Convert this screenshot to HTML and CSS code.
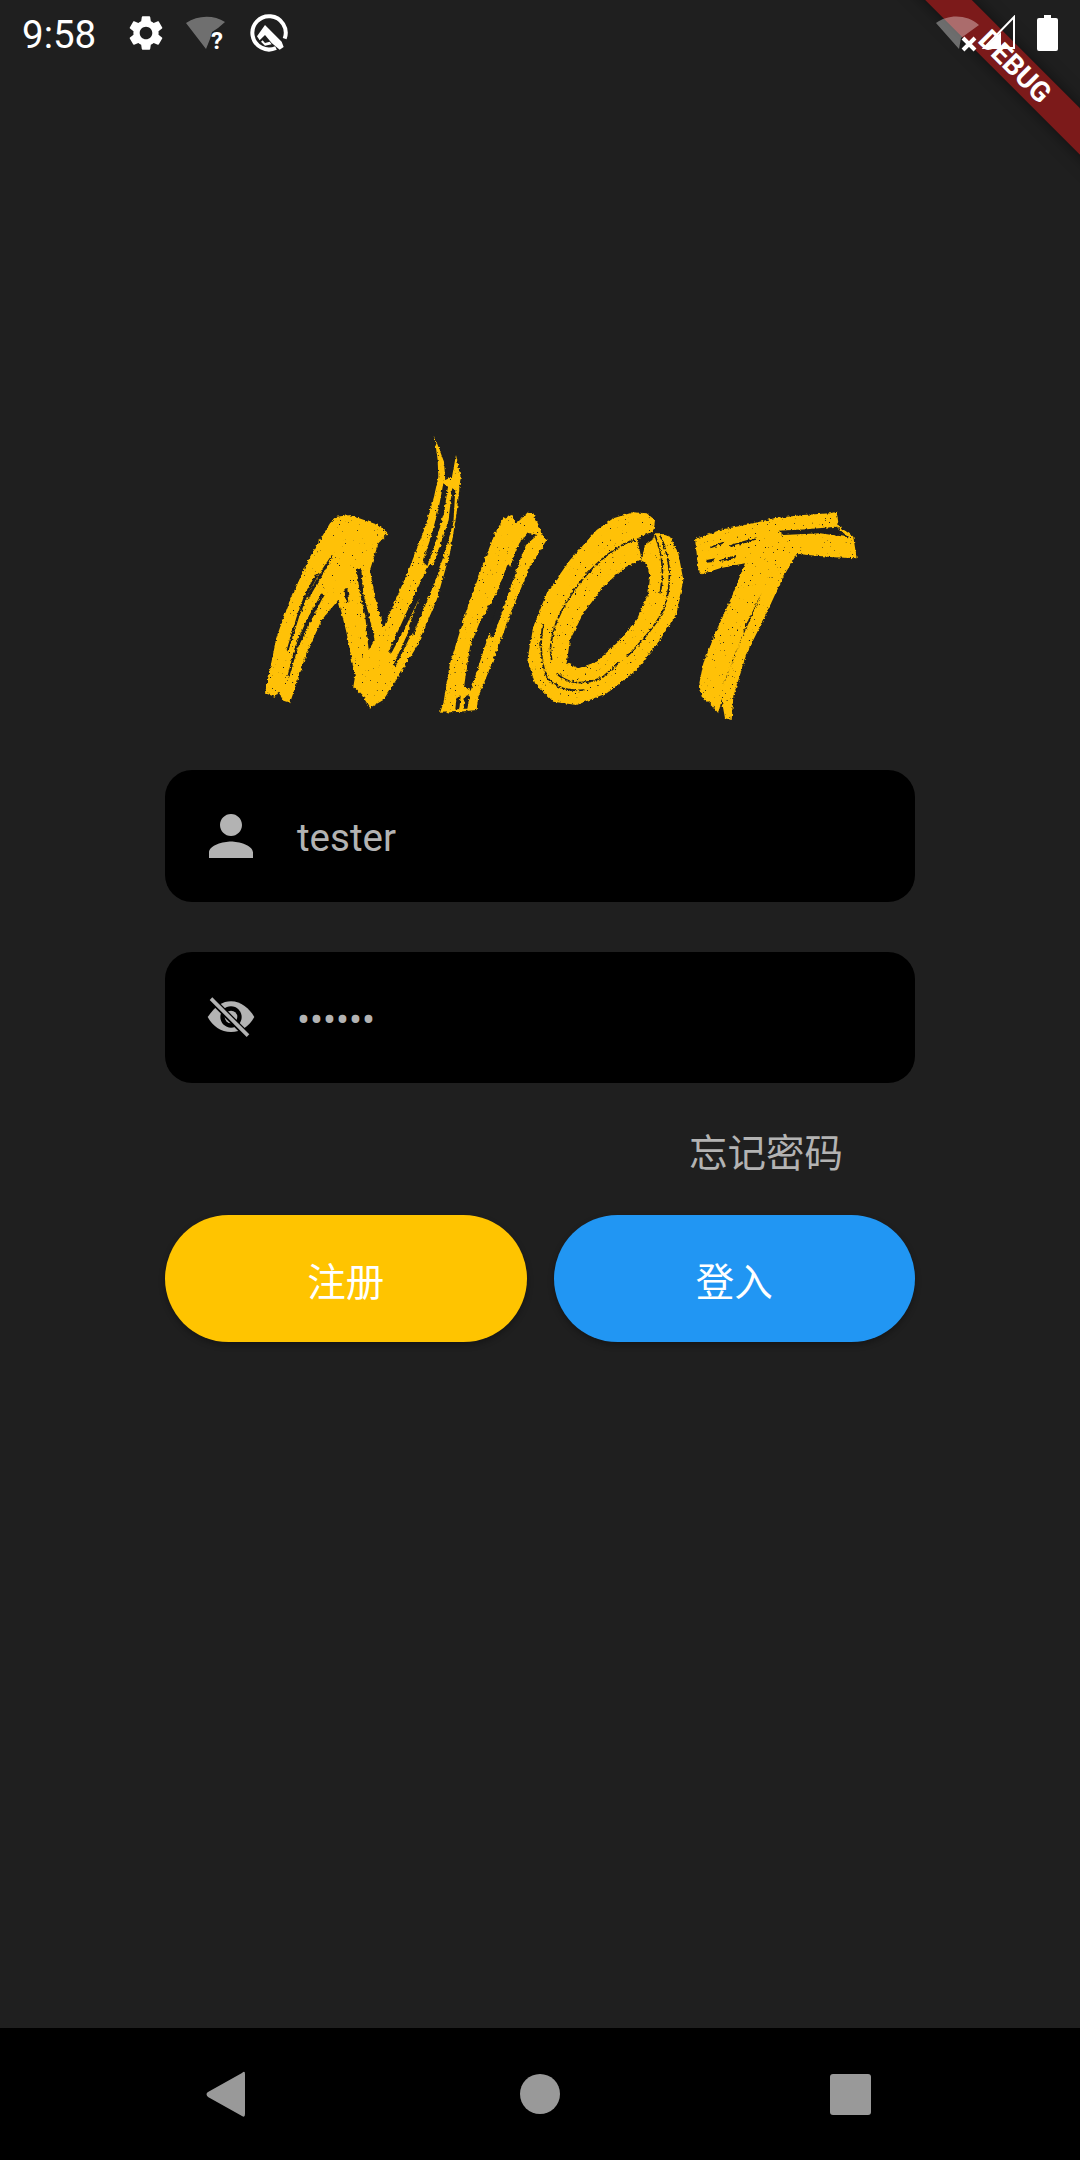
FILE: index.html
```html
<!DOCTYPE html>
<html lang="zh-CN">
<head>
    <meta charset="UTF-8">
    <meta name="viewport" content="width=device-width, initial-scale=1.0">
    <title>NIOT</title>
    <link rel="stylesheet" href="styles.css">
</head>
<body>
    <div class="page">
        <div class="debug-banner"><span>DEBUG</span></div>

        <div class="status-bar">
            <div class="status-left">
                <span class="time">9:58</span>
                <svg class="icon-gear" viewBox="0 0 24 24"><path class="white" d="M19.14 12.94c.04-.3.06-.61.06-.94 0-.32-.02-.64-.07-.94l2.03-1.58c.18-.14.23-.41.12-.61l-1.92-3.32c-.12-.22-.37-.29-.59-.22l-2.39.96c-.5-.38-1.03-.7-1.62-.94l-.36-2.54c-.04-.24-.24-.41-.48-.41h-3.84c-.24 0-.43.17-.47.41l-.36 2.54c-.59.24-1.13.57-1.62.94l-2.39-.96c-.22-.08-.47 0-.59.22L2.74 8.87c-.12.21-.08.47.12.61l2.03 1.58c-.05.3-.09.63-.09.94s.02.64.07.94l-2.03 1.58c-.18.14-.23.41-.12.61l1.92 3.32c.12.22.37.29.59.22l2.39-.96c.5.38 1.03.7 1.62.94l.36 2.54c.05.24.24.41.48.41h3.84c.24 0 .44-.17.47-.41l.36-2.54c.59-.24 1.13-.56 1.62-.94l2.39.96c.22.08.47 0 .59-.22l1.92-3.32c.12-.22.07-.47-.12-.61l-2.01-1.58zM12 15.6c-1.98 0-3.6-1.62-3.6-3.6s1.62-3.6 3.6-3.6 3.6 1.62 3.6 3.6-1.62 3.6-3.6 3.6z"/></svg>
                <svg class="icon-wifi-q" viewBox="0 -5 42 46">
                    <path class="dim" d="M0 8 C12 0 28 0 39 7 L32 13 L26 17 L24 24 L20 34 Z"/>
                    <text class="wifi-mark" x="25" y="34">?</text>
                </svg>
                <svg class="icon-q" viewBox="0 -7 168 162">
                    <path class="q-ring" d="M105 119 A50 50 0 1 1 131 91"/>
                    <path class="white" d="M72 50 L122 100 L128 116 L116 124 L92 104 L72 80 L56 96 L48 84 Z"/>
                    <path class="white" d="M60 100 L72 112 L92 108 L86 100 L72 104 L65 96 Z"/>
                </svg>
            </div>
            <div class="status-right">
                <svg class="icon-wifi-x" viewBox="0 0 46 38">
                    <path class="dim" d="M1 9 C13 0 32 0 44 11 L26 24 L24 35 Z"/>
                    <path class="x-mark" d="M28 24 L40 36 M40 24 L28 36"/>
                </svg>
                <svg class="icon-signal" viewBox="0 0 36 36">
                    <path class="signal-line" d="M34 2 V33 H4 Z"/>
                    <path class="white" d="M21 17 V33 H4 Z"/>
                </svg>
                <svg class="icon-battery" viewBox="0 0 21 36">
                    <path class="white" d="M7 0 H14 V3 H19 Q21 3 21 5 V34 Q21 36 19 36 H2 Q0 36 0 34 V5 Q0 3 2 3 H7 Z"/>
                </svg>
            </div>
        </div>

        <div class="content">
            <svg class="logo" viewBox="0 0 1860 930">
                <defs>
                    <filter id="rough" x="-5%" y="-10%" width="110%" height="120%" color-interpolation-filters="sRGB">
                        <feTurbulence type="fractalNoise" baseFrequency="0.11" numOctaves="3" seed="7" result="wobble"/>
                        <feDisplacementMap in="SourceGraphic" in2="wobble" scale="11" xChannelSelector="R" yChannelSelector="G" result="shape"/>
                        <feTurbulence type="fractalNoise" baseFrequency="0.2" numOctaves="2" seed="3"/>
                        <feColorMatrix type="matrix" values="0 0 0 0 0  0 0 0 0 0  0 0 0 0 0  14 0 0 0 -10.4" result="specks"/>
                        <feComposite in="shape" in2="specks" operator="out"/>
                    </filter>
                </defs>
                <g filter="url(#rough)">
                    <!-- N -->
                    <path class="ink" d="M45 820 L75 830 L85 815 L100 842 L120 848 L140 790 L170 700 L215 600 L265 540 L290 640 L315 770 L310 800 L335 825 L360 863 L400 840 L445 770 L500 680 L560 540 L600 400 L620 280 L632 170 L618 105 L606 170 L586 180 L582 125 L553 48 L563 120 L565 170 L552 230 L526 320 L476 450 L400 625 L375 530 L360 450 L385 370 L415 340 L385 315 L300 285 L260 290 L240 310 L180 410 L120 540 L80 650 Z"/>
                    <path class="gap" d="M580 190 L565 270 L540 360 L518 425 L532 438 L557 365 L582 280 L594 200 Z"/>
                    <path class="gap" d="M606 205 L596 300 L556 420 L516 510 L476 620 L490 645 L532 530 L577 420 L610 310 L616 210 Z"/>
                    <path class="gap" d="M540 430 L500 510 L450 620 L415 695 L423 701 L467 620 L517 515 L552 440 Z"/>
                    <path class="gap" d="M562 440 L510 560 L430 735 L437 739 L522 565 L572 445 Z"/>
                    <path class="gap" d="M245 405 L215 450 L170 530 L177 534 L223 455 L248 408 Z"/>
                    <path class="gap" d="M200 460 L165 520 L140 590 L110 690 L114 696 L146 595 L173 525 L205 465 Z"/>
                    <path class="gap" d="M215 520 L170 600 L135 680 L112 770 L117 773 L143 685 L182 605 L222 525 Z"/>
                    <path class="gap" d="M320 445 L328 510 L346 590 L356 690 L374 660 L358 590 L340 520 L334 450 Z"/>
                    <path class="gap" d="M283 505 L288 550 L298 545 L292 505 Z"/>
                    <!-- I -->
                    <path class="ink" d="M570 878 L620 876 L680 870 L685 830 L730 720 L790 560 L840 440 L890 360 L875 345 L870 325 L850 280 L835 275 L800 310 L785 285 L760 295 L735 340 L700 430 L650 570 L600 730 L580 850 Z"/>
                    <path class="gap" d="M772 435 L740 520 L692 600 L660 680 L642 800 L662 812 L698 700 L728 610 L756 555 L782 440 Z"/>
                    <path class="gap" d="M835 338 L808 370 L788 420 L756 510 L716 640 L730 652 L774 525 L808 425 L828 375 L862 345 Z"/>
                    <path class="gap" d="M620 830 L616 868 L628 868 L632 830 Z M645 828 L640 866 L652 866 L660 826 Z"/>
                </g>
                <g class="logo-right" filter="url(#rough)">
                    <!-- O -->
                    <path class="ink" fill-rule="evenodd" d="M405 120 L380 100 L340 97 L280 115 L230 150 L150 240 L80 340 L40 440 L22 540 L45 610 L100 665 L170 675 L260 640 L350 570 L420 480 L470 400 L490 300 L475 220 L450 170 L420 160 L400 160 Z M360 240 L310 265 L250 320 L190 400 L150 480 L140 550 L175 565 L230 545 L290 490 L350 420 L385 340 L390 290 L380 250 Z"/>
                    <path class="gap" d="M405 150 L385 160 L350 176 L358 205 L365 240 L375 195 L400 178 Z"/>
                    <path class="logo-line" d="M345 180 C300 190 230 240 170 320 C120 390 80 470 95 540"/>
                    <path class="logo-line" d="M110 580 C140 610 190 620 250 590 L300 545"/>
                    <path class="logo-line" d="M420 165 C450 230 460 310 430 390 C400 450 350 500 320 530"/>
                    <path class="logo-line" d="M70 430 C60 480 60 540 80 590 C100 620 140 635 190 630"/>
                    <path class="logo-line" d="M405 165 C425 220 435 270 420 340"/>
                    <!-- T -->
                    <path class="ink" d="M525 178 L600 150 L700 130 L760 115 L850 105 L930 100 L950 95 L957 140 L980 155 L1000 170 L1010 235 L940 232 L830 222 L790 290 L730 420 L680 520 L640 650 L635 720 L615 715 L605 660 L595 700 L575 675 L545 650 L538 610 L550 550 L590 450 L640 340 L675 250 L600 265 L545 283 L535 270 L530 220 Z"/>
                    <path class="gap" d="M775 152 L860 148 L950 140 L985 172 L900 160 L790 165 Z"/>
                    <path class="gap" d="M725 340 L690 420 L650 510 L620 590 L608 615 L640 540 L680 430 Z"/>
                    <path class="gap" d="M570 200 L610 185 L608 192 L572 205 Z M630 195 L710 172 L705 180 L632 202 Z M560 240 L585 235 L580 246 L558 248 Z M600 240 L650 225 L646 233 L602 246 Z"/>
                </g>
            </svg>

            <div class="field field-first">
                <svg class="field-icon" viewBox="0 0 24 24"><path d="M12 12c2.21 0 4-1.79 4-4s-1.79-4-4-4-4 1.79-4 4 1.79 4 4 4zm0 2c-2.67 0-8 1.34-8 4v2h16v-2c0-2.66-5.33-4-8-4z"/></svg>
                <span class="field-text">tester</span>
            </div>
            <div class="field">
                <svg class="field-icon" viewBox="-4 -14 198 198">
                    <path d="M25 85 C50 50 70 38 95 38 C125 38 150 60 165 85 C150 112 125 130 95 130 C65 130 40 112 25 85 Z"/>
                    <circle class="eye-ring" cx="95" cy="85" r="32"/>
                    <circle cx="95" cy="85" r="19"/>
                    <path class="eye-cut" d="M28 24 L150 146"/>
                    <path class="eye-slash" d="M35 30 L146 141"/>
                </svg>
                <span class="field-text">••••••</span>
            </div>

            <div class="forgot"><span>忘记密码</span></div>

            <div class="buttons">
                <div class="btn btn-register">注册</div>
                <div class="btn btn-login">登入</div>
            </div>
        </div>

        <div class="nav-bar">
            <svg class="nav-icon" viewBox="0 0 60 60"><path d="M46 9 Q49 6 49 10 V50 Q49 54 46 52 L12 33 Q9 30 12 28 Z"/></svg>
            <svg class="nav-icon nav-home" viewBox="0 0 60 60"><circle cx="30" cy="30" r="20"/></svg>
            <svg class="nav-icon" viewBox="0 0 60 60"><rect x="10" y="10" width="41" height="41" rx="3"/></svg>
        </div>
    </div>
</body>
</html>
```

FILE: styles.css
```css
*{
    margin: 0;
    padding: 0;
    box-sizing: border-box;
}
body{
    background-color: #1f1f1f;
    font-family: Roboto, "Noto Sans CJK SC", sans-serif;
    overflow: hidden;
}
.page{
    position: relative;
    width: 1080px;
    height: 2160px;
    display: flex;
    flex-direction: column;
    overflow: hidden;
}

/* status bar */
.status-bar{
    position: relative;
    height: 66px;
    flex: none;
    display: flex;
    justify-content: space-between;
    align-items: center;
    padding: 0 22px 0 22px;
}
.status-left, .status-right{
    display: flex;
    align-items: center;
}
.time{
    width: 73px;
    padding-top: 4px;
    font-size: 38.5px;
    line-height: 66px;
    color: #fff;
}
.icon-gear{
    width: 42px;
    height: 42px;
    margin-left: 30px;
}
.icon-wifi-q{
    width: 42px;
    height: 46px;
    margin-left: 19px;
}
.icon-q{
    width: 56px;
    height: 54px;
    margin-left: 13px;
}
.icon-wifi-x{
    width: 46px;
    height: 38px;
}
.icon-signal{
    width: 36px;
    height: 36px;
    margin-left: -1px;
}
.icon-battery{
    width: 21px;
    height: 36px;
    margin-left: 21px;
}
.white{
    fill: #fff;
}
.dim{
    fill: #fff;
    fill-opacity: .36;
}
.wifi-mark{
    font-family: Roboto, sans-serif;
    font-weight: 700;
    font-size: 24px;
    fill: #fff;
}
.q-ring{
    fill: none;
    stroke: #fff;
    stroke-width: 12;
}
.x-mark{
    fill: none;
    stroke: #fff;
    stroke-width: 4;
}
.signal-line{
    fill: none;
    stroke: #fff;
    stroke-width: 2;
}

/* flutter debug ribbon */
.debug-banner{
    position: absolute;
    left: 865px;
    top: 50px;
    width: 300px;
    height: 33px;
    background-color: #7c1a1a;
    box-shadow: 0 0 16px rgba(0, 0, 0, .5);
    transform: rotate(45deg);
    display: flex;
    justify-content: center;
    align-items: center;
}
.debug-banner span{
    font-size: 28px;
    font-weight: 700;
    line-height: 33px;
    color: #fff;
}

/* login form */
.content{
    flex: 1;
    padding: 354px 165px 0;
}
.logo{
    display: block;
    width: 620px;
    height: 310px;
    margin-left: 85px;
    margin-bottom: 40px;
}
.logo-right{
    transform: translate(810px, 180px);
}
.ink{
    fill: #ffc107;
}
.gap{
    fill: #1f1f1f;
}
.logo-line{
    fill: none;
    stroke: #1f1f1f;
    stroke-width: 5;
    stroke-dasharray: 46 5 18 4;
}
.field{
    height: 131.5px;
    display: flex;
    align-items: center;
    padding-left: 33px;
    border-radius: 27px;
    background-color: #000;
}
.field-first{
    margin-bottom: 50px;
}
.field-icon{
    width: 66px;
    height: 66px;
    flex: none;
    fill: #b3b3b3;
}
.eye-ring{
    fill: #000;
}
.eye-cut{
    fill: none;
    stroke: #000;
    stroke-width: 20;
}
.eye-slash{
    fill: none;
    stroke: #b3b3b3;
    stroke-width: 11;
}
.field-text{
    margin-left: 33px;
    padding-top: 4px;
    font-size: 38.5px;
    color: #b3b3b3;
}
.forgot{
    height: 132px;
    display: flex;
    justify-content: flex-end;
    align-items: center;
    padding: 2px 72px 0 0;
    font-size: 38.5px;
    color: #b3b3b3;
}
.buttons{
    display: flex;
    gap: 27px;
}
.btn{
    flex: 1;
    height: 127px;
    display: flex;
    justify-content: center;
    align-items: center;
    border-radius: 64px;
    font-size: 38.5px;
    color: #fff;
    box-shadow: 0 3px 6px rgba(0, 0, 0, .3);
}
.btn-register{
    background-color: #ffc400;
}
.btn-login{
    background-color: #2196f3;
}

/* android nav bar */
.nav-bar{
    height: 132px;
    flex: none;
    display: flex;
    align-items: center;
    padding-left: 196px;
    background-color: #000;
}
.nav-icon{
    width: 60px;
    height: 60px;
    fill: #999;
}
.nav-home{
    margin: 0 250px 0 254px;
}
```
